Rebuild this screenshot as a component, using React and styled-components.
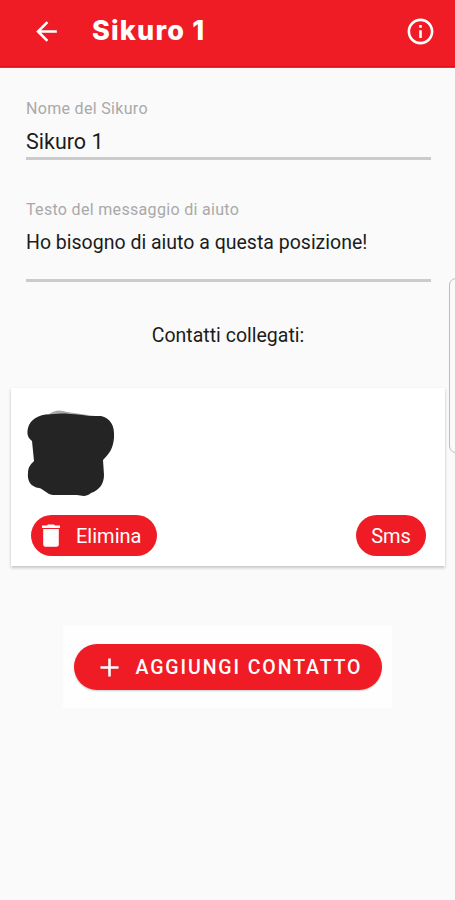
import React from 'react'
import styled, { createGlobalStyle } from 'styled-components'
import { MdArrowBack, MdInfoOutline, MdAdd } from 'react-icons/md'

function App() {
    return (
        <Screen>
            <GlobalStyle />
            <Header>
                <IconButton aria-label="Indietro"><MdArrowBack size={31} /></IconButton>
                <Title>Sikuro 1</Title>
                <IconButton aria-label="Info"><MdInfoOutline size={31} /></IconButton>
            </Header>
            <Form>
                <Field>
                    <Label>Nome del Sikuro</Label>
                    <Value $size="21.5px">Sikuro 1</Value>
                </Field>
                <Field $tall>
                    <Label>Testo del messaggio di aiuto</Label>
                    <Value>Ho bisogno di aiuto a questa posizione!</Value>
                </Field>
            </Form>
            <SectionTitle>Contatti collegati:</SectionTitle>
            <ContactCard>
                <ContactMask viewBox="0 0 92 92">
                    <path d="M25 7 Q33 1 43 5 L64 8 L38 11 Z" fill="#aaa" />
                    <path d="M30 7 C42 5 58 9 77 9 C86 11 91 18 90 31 C89 42 85 47 79 53 L80 68 C80 76 76 83 67 86 C61 91 57 88 53 88 L29 88 C22 87 20 82 15 81 C7 80 3 74 4 66 C4 60 7 57 10 54 L8 34 C2 30 3 23 5 18 C9 10 18 7 30 7 Z" fill="#242424" />
                </ContactMask>
                <Actions>
                    <DeleteButton>
                        <TrashIcon viewBox="0 0 18 23">
                            <path d="M0 1.5 H5 L6 0.5 H12 L13 1.5 H18 V4 H0 Z" />
                            <path d="M1.2 5 H16.8 V20.5 Q16.8 22.7 14.6 22.7 H3.4 Q1.2 22.7 1.2 20.5 Z" />
                        </TrashIcon>
                        Elimina
                    </DeleteButton>
                    <SmsButton>Sms</SmsButton>
                </Actions>
            </ContactCard>
            <AddPanel>
                <AddButton>
                    <MdAdd size={31} />
                    AGGIUNGI CONTATTO
                </AddButton>
            </AddPanel>
            <EdgeHandle />
        </Screen>
    )
}

const GlobalStyle = createGlobalStyle`
    * {
        box-sizing: border-box;
    }
    body {
        margin: 0;
        background: #fafafa;
    }
`

const Screen = styled.div`
    position: relative;
    display: flex;
    flex-direction: column;
    height: 900px;
    overflow: hidden;
    background: #fafafa;
    color: #1c1c1c;
    font-family: Roboto, sans-serif;
`

const Header = styled.header`
    display: flex;
    align-items: center;
    height: 68px;
    padding: 0 19px 4px 31px;
    background: #ef1c25;
    border-bottom: 1px solid #e5303a;
    box-shadow: inset 0 -1px 0 #dd0f18;
    color: #fff;
`

const IconButton = styled.button`
    display: flex;
    padding: 0;
    border: 0;
    background: none;
    color: #fff;
`

const Title = styled.h1`
    flex: 1;
    margin: -1px 0 0 30px;
    font: 800 27px/32px Inter, sans-serif;
    letter-spacing: 1.2px;
`

const Form = styled.div`
    display: flex;
    flex-direction: column;
    gap: 38px;
    padding: 29px 24px 0 26px;
`

const Field = styled.div`
    height: ${({ $tall }) => ($tall ? '84px' : '63px')};
    border-bottom: 3px solid #cbcbcb;
`

const Label = styled.div`
    padding-top: 1px;
    font-size: 16px;
    line-height: 22px;
    letter-spacing: 0.32px;
    color: #a9a9a9;
`

const Value = styled.div`
    margin-top: 8px;
    font-size: ${({ $size }) => $size || '19.5px'};
    line-height: 28px;
`

const SectionTitle = styled.h2`
    margin: 40px 0 0 1px;
    font-size: 19.5px;
    font-weight: 400;
    line-height: 28px;
    text-align: center;
`

const ContactCard = styled.section`
    display: flex;
    flex-direction: column;
    justify-content: space-between;
    height: 178px;
    margin: 38px 10px 0 11px;
    padding: 19px 19px 10px 20px;
    background: #fff;
    box-shadow: 0 2px 3px rgba(0, 0, 0, 0.2), 0 0 2px rgba(0, 0, 0, 0.06);
`

const ContactMask = styled.svg`
    width: 92px;
    height: 92px;
    margin-left: -7px;
`

const Actions = styled.div`
    display: flex;
    justify-content: space-between;
`

const PillButton = styled.button`
    display: flex;
    align-items: center;
    justify-content: center;
    border: 0;
    border-radius: 24px;
    background: #ef1c25;
    color: #fff;
    font-family: Roboto, sans-serif;
    font-size: 20px;
    white-space: nowrap;
`

const DeleteButton = styled(PillButton)`
    justify-content: flex-start;
    gap: 16px;
    width: 126px;
    height: 41px;
    padding: 0 0 0 11px;
`

const TrashIcon = styled.svg`
    width: 18px;
    height: 23px;
    fill: currentColor;
`

const SmsButton = styled(PillButton)`
    width: 70px;
    height: 41px;
    padding: 0;
`

const AddPanel = styled.div`
    display: flex;
    align-items: center;
    justify-content: center;
    width: 329px;
    height: 82px;
    margin: 60px 0 0 63px;
    background: #fefefe;
`

const AddButton = styled(PillButton)`
    justify-content: flex-start;
    gap: 11px;
    width: 308px;
    height: 46px;
    padding: 0 0 0 20px;
    font-size: 19.5px;
    font-weight: 500;
    letter-spacing: 1.9px;
    box-shadow: 0 1px 2px rgba(0, 0, 0, 0.2);
`

// system side panel handle peeking in over the right edge
const EdgeHandle = styled.div`
    position: absolute;
    top: 278px;
    right: -8px;
    width: 14px;
    height: 175px;
    border: 1px solid #bdbdbd;
    border-radius: 8px;
    background: #fafafa;
`

export default App
